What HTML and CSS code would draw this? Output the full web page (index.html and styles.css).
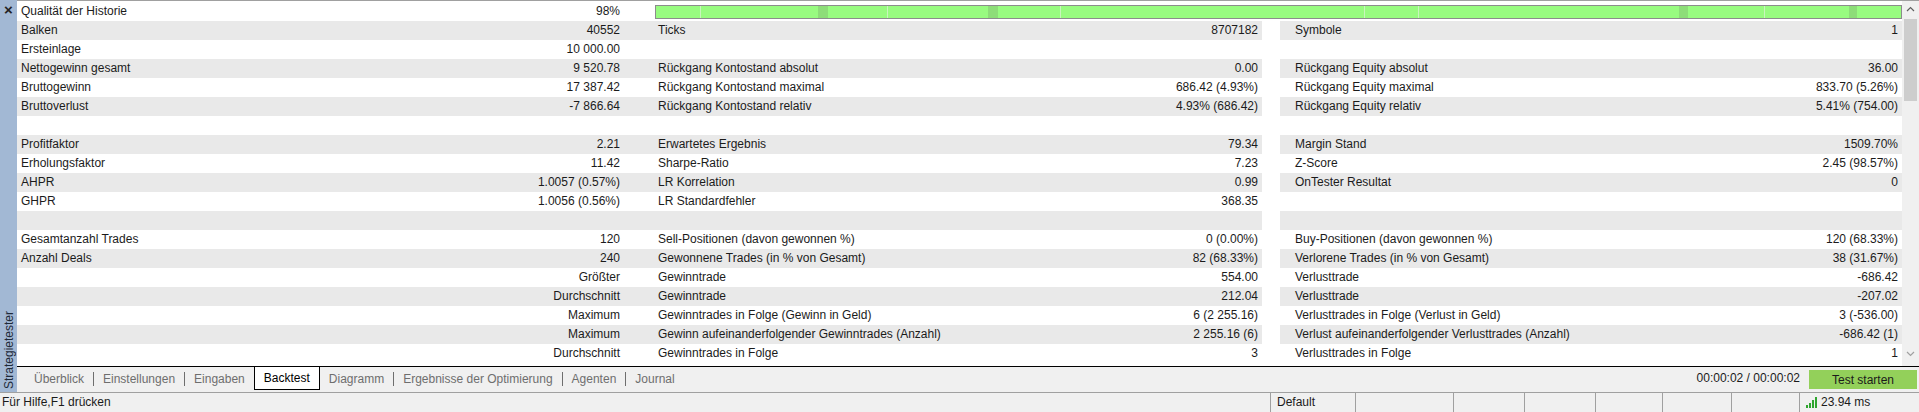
FILE: index.html
```html
<!DOCTYPE html>
<html lang="de">
<head>
  <meta charset="UTF-8">
  <title>Strategietester – Backtest</title>
  <link rel="stylesheet" href="styles.css">
</head>
<body>
  <div class="window">
    <div class="upper">
      <aside class="side">
        <span class="side-close">×</span>
        <span class="side-title">Strategietester</span>
      </aside>

      <div class="panel">
        <div class="report-wrap">
          <div class="report">
            <div class="row">
              <span class="lbl">Qualität der Historie</span><span class="val">98%</span>
              <div class="quality"></div>
            </div>
            <div class="row">
              <span class="lbl">Balken</span><span class="val">40552</span><span class="gap"></span>
              <span class="lbl">Ticks</span><span class="val">8707182</span><span class="gap2"></span>
              <span class="lbl3">Symbole</span><span class="val">1</span>
            </div>
            <div class="row">
              <span class="lbl">Ersteinlage</span><span class="val">10 000.00</span><span class="gap"></span>
              <span class="lbl"></span><span class="val"></span><span class="gap2"></span>
              <span class="lbl3"></span><span class="val"></span>
            </div>
            <div class="row">
              <span class="lbl">Nettogewinn gesamt</span><span class="val">9 520.78</span><span class="gap"></span>
              <span class="lbl">Rückgang Kontostand absolut</span><span class="val">0.00</span><span class="gap2"></span>
              <span class="lbl3">Rückgang Equity absolut</span><span class="val">36.00</span>
            </div>
            <div class="row">
              <span class="lbl">Bruttogewinn</span><span class="val">17 387.42</span><span class="gap"></span>
              <span class="lbl">Rückgang Kontostand maximal</span><span class="val">686.42 (4.93%)</span><span class="gap2"></span>
              <span class="lbl3">Rückgang Equity maximal</span><span class="val">833.70 (5.26%)</span>
            </div>
            <div class="row">
              <span class="lbl">Bruttoverlust</span><span class="val">-7 866.64</span><span class="gap"></span>
              <span class="lbl">Rückgang Kontostand relativ</span><span class="val">4.93% (686.42)</span><span class="gap2"></span>
              <span class="lbl3">Rückgang Equity relativ</span><span class="val">5.41% (754.00)</span>
            </div>
            <div class="row"></div>
            <div class="row">
              <span class="lbl">Profitfaktor</span><span class="val">2.21</span><span class="gap"></span>
              <span class="lbl">Erwartetes Ergebnis</span><span class="val">79.34</span><span class="gap2"></span>
              <span class="lbl3">Margin Stand</span><span class="val">1509.70%</span>
            </div>
            <div class="row">
              <span class="lbl">Erholungsfaktor</span><span class="val">11.42</span><span class="gap"></span>
              <span class="lbl">Sharpe-Ratio</span><span class="val">7.23</span><span class="gap2"></span>
              <span class="lbl3">Z-Score</span><span class="val">2.45 (98.57%)</span>
            </div>
            <div class="row">
              <span class="lbl">AHPR</span><span class="val">1.0057 (0.57%)</span><span class="gap"></span>
              <span class="lbl">LR Korrelation</span><span class="val">0.99</span><span class="gap2"></span>
              <span class="lbl3">OnTester Resultat</span><span class="val">0</span>
            </div>
            <div class="row">
              <span class="lbl">GHPR</span><span class="val">1.0056 (0.56%)</span><span class="gap"></span>
              <span class="lbl">LR Standardfehler</span><span class="val">368.35</span><span class="gap2"></span>
              <span class="lbl3"></span><span class="val"></span>
            </div>
            <div class="row">
              <span class="lbl"></span><span class="val"></span><span class="gap"></span>
              <span class="lbl"></span><span class="val"></span><span class="gap2"></span>
              <span class="lbl3"></span><span class="val"></span>
            </div>
            <div class="row">
              <span class="lbl">Gesamtanzahl Trades</span><span class="val">120</span><span class="gap"></span>
              <span class="lbl">Sell-Positionen (davon gewonnen %)</span><span class="val">0 (0.00%)</span><span class="gap2"></span>
              <span class="lbl3">Buy-Positionen (davon gewonnen %)</span><span class="val">120 (68.33%)</span>
            </div>
            <div class="row">
              <span class="lbl">Anzahl Deals</span><span class="val">240</span><span class="gap"></span>
              <span class="lbl">Gewonnene Trades (in % von Gesamt)</span><span class="val">82 (68.33%)</span><span class="gap2"></span>
              <span class="lbl3">Verlorene Trades (in % von Gesamt)</span><span class="val">38 (31.67%)</span>
            </div>
            <div class="row">
              <span class="lbl"></span><span class="val">Größter</span><span class="gap"></span>
              <span class="lbl">Gewinntrade</span><span class="val">554.00</span><span class="gap2"></span>
              <span class="lbl3">Verlusttrade</span><span class="val">-686.42</span>
            </div>
            <div class="row">
              <span class="lbl"></span><span class="val">Durchschnitt</span><span class="gap"></span>
              <span class="lbl">Gewinntrade</span><span class="val">212.04</span><span class="gap2"></span>
              <span class="lbl3">Verlusttrade</span><span class="val">-207.02</span>
            </div>
            <div class="row">
              <span class="lbl"></span><span class="val">Maximum</span><span class="gap"></span>
              <span class="lbl">Gewinntrades in Folge (Gewinn in Geld)</span><span class="val">6 (2 255.16)</span><span class="gap2"></span>
              <span class="lbl3">Verlusttrades in Folge (Verlust in Geld)</span><span class="val">3 (-536.00)</span>
            </div>
            <div class="row">
              <span class="lbl"></span><span class="val">Maximum</span><span class="gap"></span>
              <span class="lbl">Gewinn aufeinanderfolgender Gewinntrades (Anzahl)</span><span class="val">2 255.16 (6)</span><span class="gap2"></span>
              <span class="lbl3">Verlust aufeinanderfolgender Verlusttrades (Anzahl)</span><span class="val">-686.42 (1)</span>
            </div>
            <div class="row">
              <span class="lbl"></span><span class="val">Durchschnitt</span><span class="gap"></span>
              <span class="lbl">Gewinntrades in Folge</span><span class="val">3</span><span class="gap2"></span>
              <span class="lbl3">Verlusttrades in Folge</span><span class="val">1</span>
            </div>
          </div>

          <div class="vscroll">
            <svg class="arrow" width="17" height="17" viewBox="0 0 17 17">
              <path d="M5 10 L8.5 6.5 L12 10" fill="none" stroke="#606060" stroke-width="1.2"/>
            </svg>
            <div class="thumb"></div>
            <svg class="arrow arrow-down" width="17" height="17" viewBox="0 0 17 17">
              <path d="M5 7 L8.5 10.5 L12 7" fill="none" stroke="#a0a0a0" stroke-width="1.2"/>
            </svg>
          </div>
        </div>

        <div class="tabbar">
          <nav class="tabs">
            <span class="tab">Überblick</span><span class="sep"></span>
            <span class="tab">Einstellungen</span><span class="sep"></span>
            <span class="tab">Eingaben</span>
            <span class="tab tab-active">Backtest</span>
            <span class="tab">Diagramm</span><span class="sep"></span>
            <span class="tab">Ergebnisse der Optimierung</span><span class="sep"></span>
            <span class="tab">Agenten</span><span class="sep"></span>
            <span class="tab">Journal</span>
          </nav>
          <span class="timer">00:00:02 / 00:00:02</span>
          <button class="start">Test starten</button>
        </div>
      </div>
    </div>

    <footer class="status">
      <span class="status-help">Für Hilfe,F1 drücken</span>
      <span class="pane w85">Default</span>
      <span class="pane w98"></span>
      <span class="pane w71"></span>
      <span class="pane w71"></span>
      <span class="pane w67"></span>
      <span class="pane w69"></span>
      <span class="pane w68"></span>
      <span class="pane w120">
        <svg width="12" height="11" viewBox="0 0 12 11">
          <rect x="0" y="8" width="2" height="3" fill="#2fa52f"/>
          <rect x="3" y="6" width="2" height="5" fill="#2fa52f"/>
          <rect x="6" y="3" width="2" height="8" fill="#2fa52f"/>
          <rect x="9" y="0" width="2" height="11" fill="#2fa52f"/>
        </svg>
        23.94 ms
      </span>
    </footer>
  </div>
</body>
</html>
```

FILE: styles.css
```css
:root {
  --row-alt: #e9e9e9;
  --chrome: #f0f0f0;
  --line: #a0a0a0;
  --text: #1b1b1b;
  --muted: #6e6e6e;
  --sidebar: #a2b8d4;
  --green: #98fb80;
}

* {
  margin: 0;
  padding: 0;
  box-sizing: border-box;
}

body {
  font-family: "Liberation Sans", Arial, sans-serif;
  font-size: 12px;
  color: var(--text);
  background: #fff;
  width: 1919px;
  height: 412px;
  overflow: hidden;
}

.window {
  display: flex;
  flex-direction: column;
  height: 412px;
}

.upper {
  display: flex;
  height: 392px;
}

/* left docking strip */
.side {
  width: 17px;
  background: var(--sidebar);
  display: flex;
  flex-direction: column;
  align-items: center;
  justify-content: space-between;
  padding: 2px 0 3px;
}

.side-close {
  font-size: 15px;
  font-weight: bold;
  line-height: 16px;
  color: #222;
}

.side-title {
  writing-mode: vertical-rl;
  transform: rotate(180deg);
  line-height: 16px;
  color: #1f2a3a;
}

.panel {
  flex: 1;
  display: flex;
  flex-direction: column;
}

.report-wrap {
  display: flex;
  height: 366px;
  border-top: 1px solid var(--line);
}

.report {
  flex: 1;
  padding-top: 1px;
}

.row {
  display: grid;
  grid-template-columns: 307px 300px 30px 304px 304px 18px 311px 311px;
  height: 19px;
  align-items: center;
  white-space: nowrap;
}

.row:nth-child(even) {
  background: var(--row-alt);
}

.row > span {
  height: 19px;
  line-height: 19px;
  overflow: visible;
}

.lbl {
  padding-left: 4px;
}

.lbl3 {
  padding-left: 15px;
}

.val {
  text-align: right;
  padding-right: 4px;
}

.gap2 {
  background: #fff;
}

/* history quality strip */
.quality {
  grid-column: 4 / -1;
  height: 14px;
  margin-left: 1px;
  border: 1px solid #8c8c8c;
  background:
    linear-gradient(90deg,
      transparent 44px, #c9f5bd 44px, #c9f5bd 45px, transparent 45px,
      transparent 162px, #8ddd78 162px, #8ddd78 172px, transparent 172px,
      transparent 231px, #c9f5bd 231px, #c9f5bd 232px, transparent 232px,
      transparent 332px, #8ddd78 332px, #8ddd78 342px, transparent 342px,
      transparent 404px, #c9f5bd 404px, #c9f5bd 405px, transparent 405px,
      transparent 708px, #c9f5bd 708px, #c9f5bd 709px, transparent 709px,
      transparent 762px, #c9f5bd 762px, #c9f5bd 763px, transparent 763px,
      transparent 1023px, #8ddd78 1023px, #8ddd78 1032px, transparent 1032px,
      transparent 1108px, #c9f5bd 1108px, #c9f5bd 1109px, transparent 1109px,
      transparent 1193px, #8ddd78 1193px, #8ddd78 1201px, transparent 1201px),
    var(--green);
}

.vscroll {
  width: 17px;
  background: var(--chrome);
  display: flex;
  flex-direction: column;
}

.arrow {
  display: block;
}

.thumb {
  height: 82px;
  margin: 1px 2px 0;
  background: #cdcdcd;
}

.arrow-down {
  margin-top: auto;
  margin-bottom: 4px;
}

/* bottom tabs */
.tabbar {
  height: 26px;
  border-top: 1px solid #000;
  background: var(--chrome);
  display: flex;
  align-items: flex-start;
  padding-left: 8px;
}

.tabs {
  display: flex;
  align-items: center;
  height: 23px;
}

.tab {
  padding: 0 9px;
  color: var(--muted);
  line-height: 22px;
}

.tab-active {
  background: #fff;
  color: #000;
  border: 1px solid #000;
  border-top: none;
  height: 23px;
}

.sep {
  width: 1px;
  height: 14px;
  background: var(--muted);
}

.timer {
  margin-left: auto;
  line-height: 22px;
  margin-right: 9px;
}

.start {
  width: 108px;
  height: 19px;
  margin-top: 3px;
  margin-right: 2px;
  border: none;
  background: #93d05a;
  font: inherit;
  color: var(--text);
}

/* status bar */
.status {
  height: 20px;
  display: flex;
  background: var(--chrome);
  border-top: 1px solid var(--line);
  line-height: 19px;
}

.status-help {
  flex: 1;
  padding-left: 2px;
}

.pane {
  border-left: 1px solid var(--line);
  padding-left: 6px;
  display: flex;
  align-items: center;
  gap: 3px;
}

.w85 { width: 85px; }
.w98 { width: 98px; }
.w71 { width: 71px; }
.w67 { width: 67px; }
.w69 { width: 69px; }
.w68 { width: 68px; }
.w120 { width: 120px; }
```
